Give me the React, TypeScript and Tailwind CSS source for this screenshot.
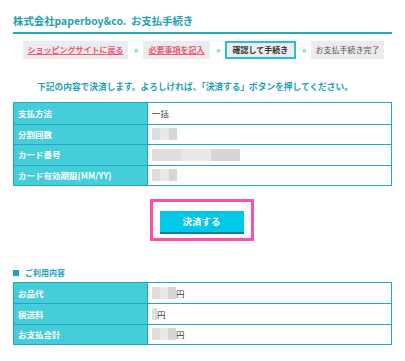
import React from 'react';

const Blur: React.FC<{ w: number }> = ({ w }) => (
  <span className="inline-flex h-[12px] align-middle" style={{ width: w }}>
    <span className="flex-1 bg-[#dedede]" />
    <span className="flex-1 bg-[#e9e9e9]" />
    <span className="flex-1 bg-[#d6d6d6]" />
  </span>
);

const Sep = () => <span className="w-[3px] text-[8px] text-[#3cc0d8] font-bold">»</span>;

const rows1: { label: string; value: React.ReactNode }[] = [
  { label: '支払方法', value: '一括' },
  { label: '分割回数', value: <Blur w={25} /> },
  { label: 'カード番号', value: <Blur w={88} /> },
  { label: 'カード有効期限(MM/YY)', value: <Blur w={25} /> },
];

const rows2: { label: string; value: React.ReactNode }[] = [
  { label: 'お品代', value: <><Blur w={24} />円</> },
  { label: '税送料', value: <><Blur w={5} />円</> },
  { label: 'お支払合計', value: <><Blur w={24} />円</> },
];

const Table: React.FC<{ rows: { label: string; value: React.ReactNode }[] }> = ({ rows }) => (
  <div className="border border-[#1ea9c8] flex flex-col">
    {rows.map((r, i) => (
      <div key={r.label} className={`flex h-[20.5px] ${i > 0 ? 'border-t border-[#1ea9c8]' : ''}`}>
        <div className="w-[134px] shrink-0 bg-[#45cdda] border-r border-[#1ea9c8] text-white font-bold text-[8.5px] flex items-center pl-[4px] whitespace-nowrap">
          {r.label}
        </div>
        <div className="flex-1 bg-white text-[#333] text-[8.5px] flex items-center pl-[4px]">{r.value}</div>
      </div>
    ))}
  </div>
);

export default function App() {
  return (
    <div className="w-[405px] h-[361px] bg-white px-[13px] pt-[12px]" style={{ fontFamily: '"Noto Sans CJK JP", "Noto Sans", sans-serif' }}>
      <h1 className="text-[10.4px] font-bold text-[#1e9fb3] leading-[17px] pb-[3px] border-b-2 border-[#2aa6b8] whitespace-nowrap">
        株式会社paperboy&co.&nbsp;&nbsp;お支払手続き
      </h1>

      <div className="flex items-center mt-[7px] pl-[10px] gap-[6px] text-[8px] whitespace-nowrap">
        <span className="h-[18px] w-[105px] bg-[#ececec] flex items-center justify-center text-[#f2577c] underline font-bold">ショッピングサイトに戻る</span>
        <Sep />
        <span className="h-[18px] w-[67px] bg-[#ececec] flex items-center justify-center text-[#f2577c] underline font-bold">必要事項を記入</span>
        <Sep />
        <span className="h-[18px] w-[71px] bg-[#ececec] border-2 border-[#2bbfd6] flex items-center justify-center text-[#333] font-bold">確認して手続き</span>
        <Sep />
        <span className="h-[18px] w-[73px] bg-[#ececec] flex items-center justify-center text-[#555]">お支払手続き完了</span>
      </div>

      <p className="text-center text-[8.7px] font-bold text-[#1e9fb3] mt-[21px] pr-[15px] whitespace-nowrap">
        下記の内容で決済します。よろしければ、「決済する」ボタンを押してください。
      </p>

      <div className="mt-[9px]">
        <Table rows={rows1} />
      </div>

      <div className="flex justify-center mt-[13px] pr-[2px]">
        <div className="border-[3px] border-[#ff4fab] px-[7px] py-[4px]">
          <button className="w-[84px] h-[23px] bg-[#00c8e6] border-b-2 border-[#0a7f96] text-white font-bold text-[9.5px]">
            決済する
          </button>
        </div>
      </div>

      <div className="mt-[26px] flex items-center gap-[6px] text-[8px] font-bold text-[#1aa3c0]">
        <span className="w-[6px] h-[6px] bg-[#1aa3c0]" />
        ご利用内容
      </div>

      <div className="mt-[3px]">
        <Table rows={rows2} />
      </div>
    </div>
  );
}
